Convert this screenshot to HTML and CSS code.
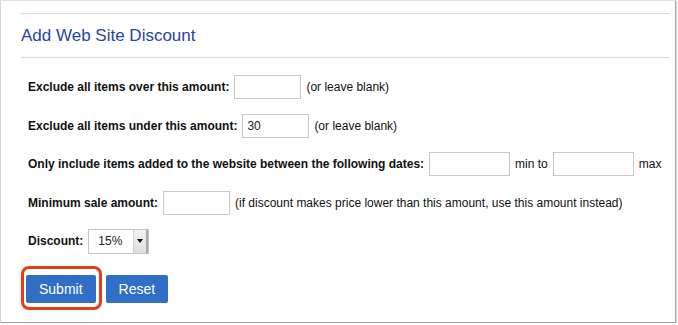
FILE: index.html
```html
<!DOCTYPE html>
<html lang="en">
<head>
  <meta charset="UTF-8" />
  <title>Add Web Site Discount</title>
  <link rel="stylesheet" href="styles.css">
</head>
<body>
  <div class="panel">
    <div class="section-head">
      <h2>Add Web Site Discount</h2>
    </div>
    <form class="discount-form">
      <div class="row">
        <label for="overAmount">Exclude all items over this amount:</label>
        <input type="text" id="overAmount" class="amount" />
        <span class="note">(or leave blank)</span>
      </div>
      <div class="row">
        <label for="underAmount">Exclude all items under this amount:</label>
        <input type="text" id="underAmount" class="amount" value="30" />
        <span class="note">(or leave blank)</span>
      </div>
      <div class="row">
        <label for="minDate">Only include items added to the website between the following dates:</label>
        <input type="text" id="minDate" class="date" />
        <span class="note">min to</span>
        <input type="text" id="maxDate" class="date" />
        <span class="note">max</span>
      </div>
      <div class="row">
        <label for="minSale">Minimum sale amount:</label>
        <input type="text" id="minSale" class="amount" />
        <span class="note">(if discount makes price lower than this amount, use this amount instead)</span>
      </div>
      <div class="row">
        <label for="discount">Discount:</label>
        <span class="select-box">
          <select id="discount">
            <option>5%</option>
            <option>10%</option>
            <option selected>15%</option>
            <option>20%</option>
            <option>25%</option>
          </select>
          <span class="select-arrow"></span>
        </span>
      </div>
      <div class="actions">
        <span class="highlight">
          <button type="submit" class="btn">Submit</button>
        </span>
        <button type="reset" class="btn">Reset</button>
      </div>
    </form>
  </div>
</body>
</html>
```

FILE: styles.css
```css
body {
  margin: 0;
  background-color: #fff;
  font-family: "Liberation Sans", Arial, sans-serif;
  color: #111;
}
.panel {
  box-sizing: border-box;
  width: 676px;
  height: 323px;
  border-top: 1px solid #e2e2e2;
  border-left: 1px solid #d4d4d4;
  border-right: 1px solid #a8a8a8;
  border-bottom: 1px solid #a0a0a0;
  box-shadow: 1px 1px 1px rgba(0, 0, 0, 0.15);
  padding-top: 12px;
}
.section-head {
  margin: 0 5px 0 20px;
  border-top: 1px solid #dcdcdc;
  border-bottom: 1px solid #dcdcdc;
  height: 45px;
  box-sizing: border-box;
}
h2 {
  margin: 0;
  padding-top: 12px;
  font-size: 17px;
  line-height: 20px;
  font-weight: normal;
  color: #2844a6;
}
.discount-form {
  padding: 17px 0 0 27px;
}
.row {
  display: flex;
  align-items: center;
  gap: 5px;
  height: 24px;
  margin-bottom: 14.5px;
  font-size: 12px;
}
label {
  font-weight: bold;
}
input {
  box-sizing: border-box;
  height: 24px;
  border: 1px solid #c8c8c8;
  padding: 0 4px;
  font-family: inherit;
  font-size: 12px;
  color: #222;
}
.amount {
  width: 67px;
}
.date {
  width: 81px;
}
.note {
  color: #111;
}
.select-box {
  display: inline-flex;
  height: 25px;
  border: 1px solid #c4c4c4;
  box-sizing: border-box;
}
select {
  appearance: none;
  -webkit-appearance: none;
  border: none;
  background: #fff;
  width: 44px;
  padding: 0 0 0 9px;
  font-family: inherit;
  font-size: 12px;
  color: #222;
  outline: none;
}
.select-arrow {
  width: 12px;
  background: linear-gradient(#f2f2f2, #dedede);
  border-left: 1px solid #d0d0d0;
  border-right: 2px solid #a9a9a9;
  display: flex;
  align-items: center;
  justify-content: center;
}
.select-arrow::after {
  content: "";
  border-left: 3px solid transparent;
  border-right: 3px solid transparent;
  border-top: 4px solid #111;
}
.actions {
  display: flex;
  gap: 10px;
  margin-top: 22px;
  margin-left: -2px;
}
.highlight {
  position: relative;
  display: inline-flex;
}
.highlight::after {
  content: "";
  position: absolute;
  top: -9px;
  bottom: -7px;
  left: -5px;
  right: -6px;
  border: 3px solid #e53e17;
  border-radius: 8px;
  pointer-events: none;
}
.btn {
  height: 28px;
  padding: 0 13px;
  background-color: #2f6fc5;
  color: #fff;
  border: none;
  border-radius: 2px;
  font-family: inherit;
  font-size: 14px;
  cursor: pointer;
}
.btn:hover {
  background-color: #255ca8;
}
```
